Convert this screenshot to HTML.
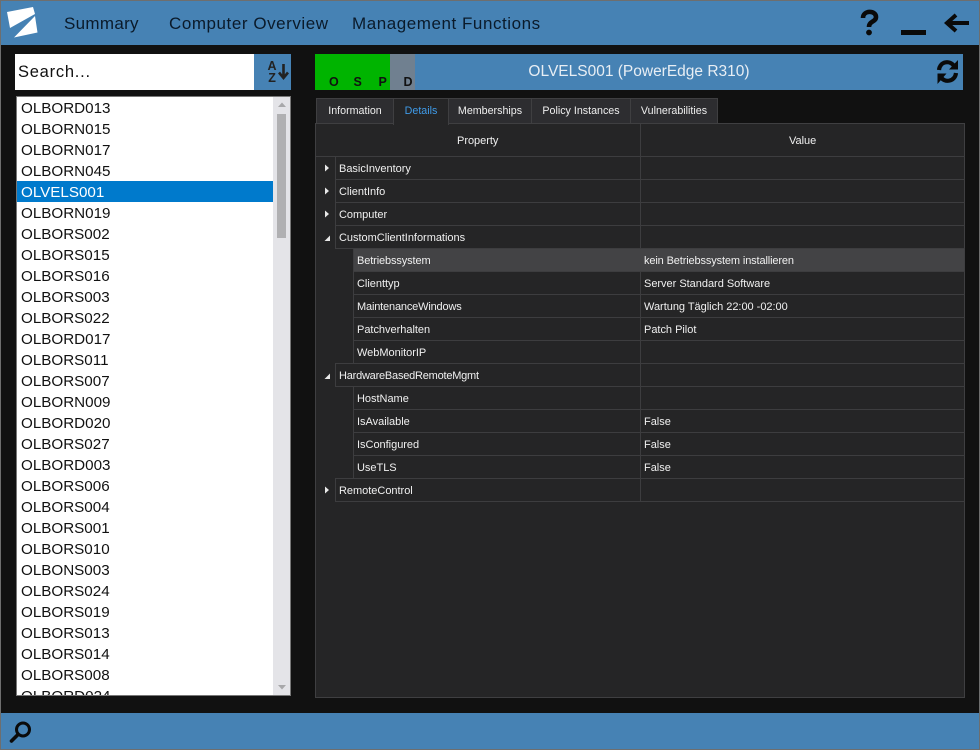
<!DOCTYPE html>
<html><head><meta charset="utf-8"><style>
*{box-sizing:border-box;margin:0;padding:0}
html,body{width:980px;height:750px;overflow:hidden;background:#111;font-family:"Liberation Sans",sans-serif}
.a{position:absolute}
.t{position:absolute;white-space:nowrap}
.nav{top:14px;font-size:17px;line-height:20px;color:#0a1a2a;letter-spacing:.3px}
.li{left:21px;height:21px;line-height:21px;font-size:15.2px;color:#111;white-space:nowrap;position:absolute}
.h{position:absolute;height:1px;background:#3d3d3f;right:15px}
.v{position:absolute;width:1px;background:#3d3d3f}
.g{position:absolute;font-size:11px;line-height:14px;color:#f0f0f0;white-space:nowrap;letter-spacing:-.02px;margin-top:1px}
.tab{position:absolute;top:98px;height:26px;background:#2d2d30;border:1px solid #3f3f41;font-size:10.7px;line-height:24px;text-align:center;color:#eee;white-space:nowrap}
.st{position:absolute;top:75px;font-size:12.5px;font-weight:bold;line-height:14px;color:#111}
</style></head><body>
<div class="a" style="left:0;top:0;width:980px;height:750px;border:1px solid #6e6e6e;z-index:9"></div>
<div class="a" style="left:0;top:0;width:980px;height:45px;background:#4682b4"></div>
<div class="a" style="left:0;top:713px;width:980px;height:37px;background:#4682b4"></div>

<svg class="a" style="left:0;top:0" width="60" height="45"><path d="M7 12 L33 7 L35 14 L10 28 Z M35 16 L37.5 32.5 L14 37.5 Z" fill="#fff"/></svg>
<div class="t nav" style="left:64px">Summary</div>
<div class="t nav" style="left:169px;letter-spacing:.55px">Computer Overview</div>
<div class="t nav" style="left:352px;letter-spacing:.55px">Management Functions</div>

<svg class="a" style="left:855px;top:5px" width="115" height="35">
<path d="M8 13 C8 5 21 5 21 12 C21 17 14 16 14 22" fill="none" stroke="#0a0a0a" stroke-width="4.6"/><circle cx="14" cy="27.5" r="2.9" fill="#0a0a0a"/>
<rect x="46" y="25" width="25" height="5" fill="#0a0a0a"/>
<path d="M114 18 H93 M101 10 L92 18 L101 26" fill="none" stroke="#0a0a0a" stroke-width="4"/>
</svg>

<div class="a" style="left:15px;top:54px;width:239px;height:36px;background:#fff"></div>
<div class="t" style="left:18px;top:62px;font-size:16.5px;line-height:20px;color:#111;letter-spacing:.75px">Search...</div>
<div class="a" style="left:254px;top:54px;width:37px;height:36px;background:#4682b4"></div>
<div class="t" style="left:267.5px;top:60px;font-size:12.5px;font-weight:bold;line-height:12px;color:#222;text-align:center">A<br>Z</div>
<svg class="a" style="left:278px;top:62px" width="12" height="20"><path d="M5.5 2 V16 M1 10.5 L5.5 16 L10 10.5" fill="none" stroke="#222" stroke-width="2.6"/></svg>

<div class="a" style="left:16px;top:96px;width:275px;height:600px;background:#fff;border:1px solid #777;overflow:hidden">
<div class="a" style="left:0;top:84px;width:256px;height:21px;background:#007acc"></div>
<div class="a" style="left:256px;top:0;width:17px;height:598px;background:#e4e4e8"></div>
<div class="a" style="left:260px;top:17px;width:9px;height:124px;background:#b0b0b2"></div>
<svg class="a" style="left:256px;top:0" width="17" height="598"><path d="M5 10 L9 5.5 L13 10Z M5 588 H13 L9 592.5Z" fill="#a8a8aa"/></svg>
<div style="position:absolute;left:-17px;top:-96px;width:270px;height:694px;overflow:hidden">
<div class="li" style="top:97px">OLBORD013</div><div class="li" style="top:118px">OLBORN015</div><div class="li" style="top:139px">OLBORN017</div><div class="li" style="top:160px">OLBORN045</div><div class="li" style="top:181px;color:#fff">OLVELS001</div><div class="li" style="top:202px">OLBORN019</div><div class="li" style="top:223px">OLBORS002</div><div class="li" style="top:244px">OLBORS015</div><div class="li" style="top:265px">OLBORS016</div><div class="li" style="top:286px">OLBORS003</div><div class="li" style="top:307px">OLBORS022</div><div class="li" style="top:328px">OLBORD017</div><div class="li" style="top:349px">OLBORS011</div><div class="li" style="top:370px">OLBORS007</div><div class="li" style="top:391px">OLBORN009</div><div class="li" style="top:412px">OLBORD020</div><div class="li" style="top:433px">OLBORS027</div><div class="li" style="top:454px">OLBORD003</div><div class="li" style="top:475px">OLBORS006</div><div class="li" style="top:496px">OLBORS004</div><div class="li" style="top:517px">OLBORS001</div><div class="li" style="top:538px">OLBORS010</div><div class="li" style="top:559px">OLBONS003</div><div class="li" style="top:580px">OLBORS024</div><div class="li" style="top:601px">OLBORS019</div><div class="li" style="top:622px">OLBORS013</div><div class="li" style="top:643px">OLBORS014</div><div class="li" style="top:664px">OLBORS008</div><div class="li" style="top:685px;height:9px;overflow:hidden">OLBORD024</div>
</div></div>

<div class="a" style="left:315px;top:54px;width:648px;height:36px;background:#4682b4"></div>
<div class="a" style="left:315px;top:54px;width:75px;height:36px;background:#00b400"></div>
<div class="a" style="left:390px;top:54px;width:25px;height:36px;background:#708090"></div>
<div class="st" style="left:329px">O</div><div class="st" style="left:353.5px">S</div><div class="st" style="left:378.5px">P</div><div class="st" style="left:403.5px">D</div>
<div class="t" style="left:415px;width:448px;top:62px;text-align:center;font-size:15.5px;line-height:20px;color:#e8eef4">OLVELS001 (PowerEdge R310)</div>
<svg class="a" style="left:935px;top:58px" width="26" height="28"><path d="M4 12 C5 3 15 2 19 8 M21 15 C20 24 9 25 6 19" fill="none" stroke="#0a0a0a" stroke-width="4.2"/><path d="M23 2 V11.5 H14Z M2.5 26 V15.5 H11.5Z" fill="#0a0a0a"/></svg>

<div class="tab" style="left:316px;width:78px">Information</div>
<div class="tab" style="left:448px;width:84px">Memberships</div>
<div class="tab" style="left:531px;width:100px">Policy Instances</div>
<div class="tab" style="left:630px;width:88px">Vulnerabilities</div>

<div class="a" style="left:315px;top:123px;width:650px;height:575px;background:#252526;border:1px solid #3f3f41"></div>
<div class="tab" style="left:393px;width:56px;height:27px;background:#252526;color:#3f9be8;border-bottom:0">Details</div>

<div class="h" style="left:316px;top:156px"></div>
<div class="h" style="left:335px;top:179px"></div><div class="h" style="left:335px;top:202px"></div><div class="h" style="left:335px;top:225px"></div><div class="h" style="left:335px;top:248px"></div>
<div class="h" style="left:353px;top:271px"></div><div class="h" style="left:353px;top:294px"></div><div class="h" style="left:353px;top:317px"></div><div class="h" style="left:353px;top:340px"></div>
<div class="h" style="left:335px;top:363px"></div><div class="h" style="left:335px;top:386px"></div>
<div class="h" style="left:353px;top:409px"></div><div class="h" style="left:353px;top:432px"></div><div class="h" style="left:353px;top:455px"></div>
<div class="h" style="left:335px;top:478px"></div><div class="h" style="left:335px;top:501px"></div>
<div class="v" style="left:640px;top:124px;height:378px"></div>
<div class="v" style="left:335px;top:157px;height:91px"></div>
<div class="v" style="left:353px;top:249px;height:114px"></div>
<div class="v" style="left:335px;top:364px;height:22px"></div>
<div class="v" style="left:353px;top:387px;height:91px"></div>
<div class="v" style="left:335px;top:479px;height:22px"></div>
<div class="a" style="left:354px;top:249px;width:610px;height:22px;background:#434345"></div>

<svg class="a" style="left:320px;top:160px" width="16" height="340" fill="#e8e8e8">
<path d="M5 4.5 L9 8 L5 11.5Z M5 27.5 L9 31 L5 34.5Z M5 50.5 L9 54 L5 57.5Z M5 326.5 L9 330 L5 333.5Z M4.5 81 L10 75.5 V81Z M4.5 219 L10 213.5 V219Z"/>
</svg>

<div class="g" style="left:457px;top:133px">Property</div>
<div class="g" style="left:789px;top:133px">Value</div>
<div class="g" style="left:339px;top:161px">BasicInventory</div>
<div class="g" style="left:339px;top:184px">ClientInfo</div>
<div class="g" style="left:339px;top:207px">Computer</div>
<div class="g" style="left:339px;top:230px">CustomClientInformations</div>
<div class="g" style="left:357px;top:253px;letter-spacing:-.12px">Betriebssystem</div><div class="g" style="left:644px;top:253px;letter-spacing:-.13px">kein Betriebssystem installieren</div>
<div class="g" style="left:357px;top:276px">Clienttyp</div><div class="g" style="left:644px;top:276px">Server Standard Software</div>
<div class="g" style="left:357px;top:299px;letter-spacing:-.17px">MaintenanceWindows</div><div class="g" style="left:644px;top:299px">Wartung Täglich 22:00 -02:00</div>
<div class="g" style="left:357px;top:322px">Patchverhalten</div><div class="g" style="left:644px;top:322px">Patch Pilot</div>
<div class="g" style="left:357px;top:345px">WebMonitorIP</div>
<div class="g" style="left:339px;top:368px;letter-spacing:-.22px">HardwareBasedRemoteMgmt</div>
<div class="g" style="left:357px;top:391px">HostName</div>
<div class="g" style="left:357px;top:414px">IsAvailable</div><div class="g" style="left:644px;top:414px">False</div>
<div class="g" style="left:357px;top:437px">IsConfigured</div><div class="g" style="left:644px;top:437px">False</div>
<div class="g" style="left:357px;top:460px">UseTLS</div><div class="g" style="left:644px;top:460px">False</div>
<div class="g" style="left:339px;top:483px">RemoteControl</div>

<svg class="a" style="left:8px;top:718px" width="26" height="26"><circle cx="15" cy="11.5" r="6.5" fill="none" stroke="#0a0a0a" stroke-width="3"/><path d="M9.5 17 L3.5 23" stroke="#0a0a0a" stroke-width="3.6" stroke-linecap="round"/></svg>
</body></html>
